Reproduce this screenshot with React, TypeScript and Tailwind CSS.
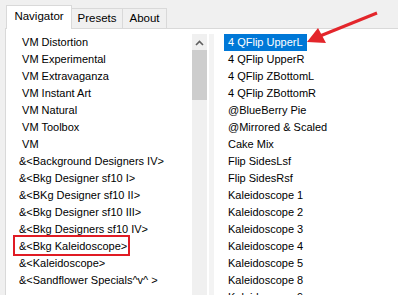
const leftItems = [
  " VM Distortion",
  " VM Experimental",
  " VM Extravaganza",
  " VM Instant Art",
  " VM Natural",
  " VM Toolbox",
  " VM",
  "&<Background Designers IV>",
  "&<Bkg Designer sf10 I>",
  "&<BKg Designer sf10 II>",
  "&<Bkg Designer sf10 III>",
  "&<Bkg Designers sf10 IV>",
  "&<Bkg Kaleidoscope>",
  "&<Kaleidoscope>",
  "&<Sandflower Specials^v^ >",
];

const rightItems = [
  "4 QFlip UpperL",
  "4 QFlip UpperR",
  "4 QFlip ZBottomL",
  "4 QFlip ZBottomR",
  "@BlueBerry Pie",
  "@Mirrored & Scaled",
  "Cake Mix",
  "Flip SidesLsf",
  "Flip SidesRsf",
  "Kaleidoscope 1",
  "Kaleidoscope 2",
  "Kaleidoscope 3",
  "Kaleidoscope 4",
  "Kaleidoscope 5",
  "Kaleidoscope 8",
  "Kaleidoscope 9",
];

function App() {
  return (
    <div
      className="relative h-[295px] w-[398px] overflow-hidden bg-[#f0f0f0] text-[11px] text-black"
      style={{ fontFamily: '"Liberation Sans", Arial, sans-serif' }}
    >
      {/* tabs */}
      <div className="flex h-[28px] items-end pl-[6px]">
        <div className="relative z-10 -mb-px flex h-[24px] w-[66px] items-center justify-center border border-b-0 border-[#d9d9d9] bg-white pb-[2px] text-[11.5px]">
          Navigator
        </div>
        <div className="flex h-[20px] w-[51px] items-center justify-center border border-b-0 border-l-0 border-[#d9d9d9] bg-[#f0f0f0] text-[11.5px]">
          Presets
        </div>
        <div className="flex h-[20px] w-[44px] items-center justify-center border border-b-0 border-l-0 border-[#d9d9d9] bg-[#f0f0f0] text-[11.5px]">
          About
        </div>
      </div>

      {/* panel */}
      <div className="ml-[5px] flex h-[267px] border-l border-t border-[#d9d9d9] bg-white pt-[5px]">
        <div className="w-[186px] pl-[13px]">
          {leftItems.map((item) => (
            <div key={item} className="relative flex h-[17px] items-center whitespace-pre">
              {item}
              {item === "&<Bkg Kaleidoscope>" && (
                <span className="absolute left-[-6px] top-[-3px] h-[21px] w-[117px] border-2 border-[#e01b24]" />
              )}
            </div>
          ))}
        </div>

        <div className="flex w-[15px] flex-col items-center bg-[#f0f0f0]">
          <svg width="9" height="6" viewBox="0 0 9 6" className="mt-[6px]">
            <path d="M1 5 L4.5 1.5 L8 5" stroke="#606060" strokeWidth="1.6" fill="none" />
          </svg>
          <div className="mt-[4px] h-[50px] w-[15px] bg-[#cdcdcd]" />
        </div>
        <div className="w-[2px] bg-white" />
        <div className="w-[5px] bg-[#f3f3f3]" />

        <div className="flex-1 pl-[10px]">
          {rightItems.map((item, i) => (
            <div key={item} className="flex h-[17px] items-center">
              <span
                className={
                  i === 0
                    ? "flex h-[17px] items-center bg-[#0078d7] px-[4px] text-white"
                    : "px-[4px]"
                }
              >
                {item}
              </span>
            </div>
          ))}
        </div>
      </div>

      {/* red arrow overlay */}
      <svg className="absolute left-0 top-0" width="398" height="295">
        <line x1="377" y1="13" x2="320" y2="36" stroke="#e3262b" strokeWidth="3" />
        <polygon points="307,42 318,28 326,43" fill="#e3262b" />
      </svg>
    </div>
  );
}

export default App;
